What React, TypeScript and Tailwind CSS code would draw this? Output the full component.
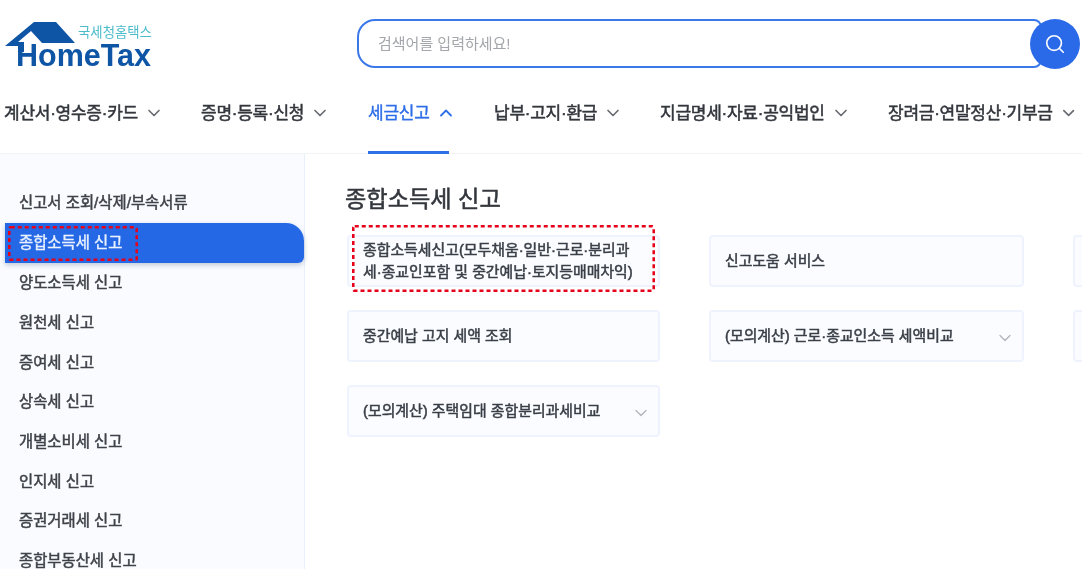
import { ChevronDown, ChevronUp, Search } from "lucide-react";

const nav = [
  { t: "계산서·영수증·카드", w: "w-[197px]" },
  { t: "증명·등록·신청", w: "w-[167px]" },
  { t: "세금신고", w: "w-[126px]", active: true },
  { t: "납부·고지·환급", w: "w-[166px]" },
  { t: "지급명세·자료·공익법인", w: "w-[228px]" },
  { t: "장려금·연말정산·기부금", w: "w-[190px]" },
];
const side = ["양도소득세 신고", "원천세 신고", "증여세 신고", "상속세 신고", "개별소비세 신고", "인지세 신고", "증권거래세 신고", "종합부동산세 신고"];

function Dashed({ w, h, className }: { w: number; h: number; className: string }) {
  return (
    <svg className={`absolute ${className}`} width={w} height={h} viewBox={`0 0 ${w} ${h}`}>
      <rect x="1.25" y="1.25" width={w - 2.5} height={h - 2.5} rx="1.5" fill="none" stroke="#e6001a" strokeWidth="2.6" strokeDasharray="4 3" />
    </svg>
  );
}

function Card({ children, chevron }: { children: React.ReactNode; chevron?: boolean }) {
  return (
    <div className="h-[52px] rounded-[4px] border-2 border-[#eef3fe] bg-[#fbfcff] pl-[14px] pr-[7px] flex items-center justify-between text-[14.9px] leading-[22px] text-[#3a3f47] [-webkit-text-stroke:0.5px_#3a3f47]">
      <span>{children}</span>
      {chevron && <ChevronDown className="w-[20px] h-[20px] text-[#b0b4ba] shrink-0 mt-[4px]" strokeWidth={1.5} />}
    </div>
  );
}

export default function App() {
  return (
    <div className="w-[1082px] h-[569px] overflow-hidden bg-white blur-[0.5px]" style={{ fontFamily: '"Liberation Sans", "Noto Sans CJK KR", sans-serif' }}>
      <header className="h-[154px] border-b border-[#f1f3f6] flex flex-col">
        <div className="h-[88px] flex">
          <div className="w-[357px] relative shrink-0">
            <svg className="absolute left-0 top-0" width="80" height="56" viewBox="0 0 80 56">
              <path d="M5 46 L34 22 H56 L75 43 H42 L31 31 L18 42 H24 V52 H18 V46 Z" fill="#0f55a5" />
            </svg>
            <span className="absolute left-[78px] top-[25px] text-[13.4px] leading-[16px] text-[#4cbccb]">국세청홈택스</span>
            <span className="absolute left-[16px] top-[41px] text-[30.5px] leading-[28px] font-bold text-[#0f55a5]">HomeTax</span>
          </div>
          <div className="mt-[19px] h-[50px] flex w-[723px]">
            <div className="w-[685px] h-[49px] rounded-l-[18px] rounded-r-[8px] border-[2.5px] border-[#3b78ea] pl-[19px] pt-[1px] flex items-center text-[15px] text-[#a3a6aa]">
              검색어를 입력하세요!
            </div>
            <div className="w-[50px] h-[50px] -ml-[12px] rounded-full bg-[#2a6ae8] flex items-center justify-center shrink-0">
              <Search className="w-[22px] h-[22px] text-white" strokeWidth={1.8} />
            </div>
          </div>
        </div>
        <nav className="flex flex-1 pl-[4px]">
          {nav.map((n) => (
            <div key={n.t} className={`${n.w} shrink-0 h-full relative flex items-start pt-[14px] gap-[6px] text-[17px] leading-[24px] tracking-[-0.25px] whitespace-nowrap ${n.active ? "text-[#2f6fe8] [-webkit-text-stroke:0.4px_#2f6fe8]" : "text-[#33373d] [-webkit-text-stroke:0.5px_#33373d]"}`}>
              <span>{n.t}</span>
              {n.active ? (
                <ChevronUp className="w-[20px] h-[20px] mt-[1px]" strokeWidth={2.2} />
              ) : (
                <ChevronDown className="w-[20px] h-[20px] mt-[1px] text-[#666a70]" strokeWidth={2} />
              )}
              {n.active && <div className="absolute left-0 bottom-[-1px] w-[81px] h-[3px] bg-[#2f6fe8]" />}
            </div>
          ))}
        </nav>
      </header>
      <div className="flex h-[415px]">
        <aside className="w-[305px] shrink-0 bg-[#f9fbff] border-r border-[#e9effb] pt-[28px] pl-[5px] text-[15.4px] text-[#3f4349] [-webkit-text-stroke:0.5px_#3f4349]">
          <div className="h-[41px] pl-[14px] flex items-center">신고서 조회/삭제/부속서류</div>
          <div className="h-[40px] relative rounded-tr-[18px] rounded-br-[6px] bg-[#2568e6] pl-[14px] flex items-center text-[#eaf2ff] [-webkit-text-stroke:0.4px_#eaf2ff] shadow-[0_2px_5px_rgba(60,80,120,0.3)]">
            종합소득세 신고
            <Dashed w={130} h={35} className="left-[3px] top-[3px]" />
          </div>
          {side.map((s) => (
            <div key={s} className="h-[39.7px] pl-[14px] flex items-center">{s}</div>
          ))}
        </aside>
        <main className="flex-1 pl-[40px] min-w-0 overflow-hidden">
          <h1 className="mt-[29px] text-[23.2px] leading-[32px] text-[#33373d] [-webkit-text-stroke:0.55px_#33373d]">종합소득세 신고</h1>
          <div className="mt-[20px] ml-[2px] grid grid-cols-[313px_315px_313px] gap-x-[49px] gap-y-[23px]">
            <div className="relative">
              <Card>
                종합소득세신고(모두채움·일반·근로·분리과
                <br />
                세·종교인포함 및 중간예납·토지등매매차익)
              </Card>
              <Dashed w={303} h={67} className="left-[5px] -top-[10px]" />
            </div>
            <Card>신고도움 서비스</Card>
            <Card>&nbsp;</Card>
            <Card>중간예납 고지 세액 조회</Card>
            <Card chevron>(모의계산) 근로·종교인소득 세액비교</Card>
            <Card>&nbsp;</Card>
            <Card chevron>(모의계산) 주택임대 종합분리과세비교</Card>
          </div>
        </main>
      </div>
    </div>
  );
}
